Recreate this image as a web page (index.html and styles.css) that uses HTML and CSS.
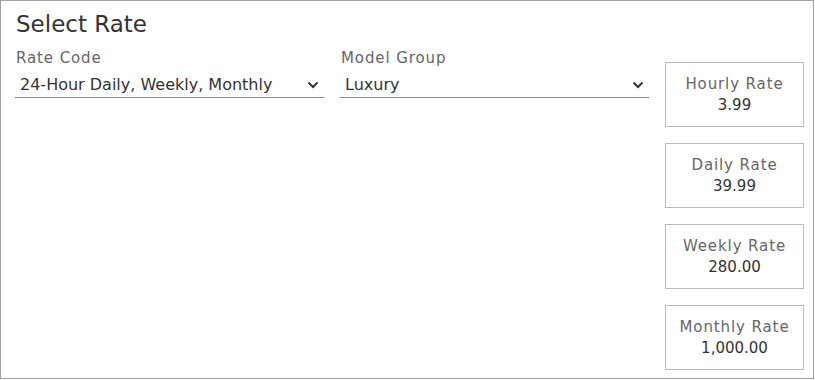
FILE: index.html
```html
<!DOCTYPE html>
<html lang="en">
<head>
    <meta charset="UTF-8">
    <title>Select Rate</title>
    <link rel="stylesheet" href="styles.css">
</head>
<body>
    <div class="panel">
        <h1>Select Rate</h1>
        <div class="layout">
            <div class="field">
                <label for="ratecode">Rate Code</label>
                <div class="select">
                    <span>24-Hour Daily, Weekly, Monthly</span>
                    <svg width="12" height="8" viewBox="0 0 12 8"><path d="M1.5 1.5 L6 6 L10.5 1.5" fill="none" stroke="#333" stroke-width="2"/></svg>
                </div>
            </div>
            <div class="field">
                <label for="modelgroup">Model Group</label>
                <div class="select">
                    <span>Luxury</span>
                    <svg width="12" height="8" viewBox="0 0 12 8"><path d="M1.5 1.5 L6 6 L10.5 1.5" fill="none" stroke="#333" stroke-width="2"/></svg>
                </div>
            </div>
            <div class="rates">
                <div class="rate"><div class="rate-name">Hourly Rate</div><div class="rate-value">3.99</div></div>
                <div class="rate"><div class="rate-name">Daily Rate</div><div class="rate-value">39.99</div></div>
                <div class="rate"><div class="rate-name">Weekly Rate</div><div class="rate-value">280.00</div></div>
                <div class="rate"><div class="rate-name">Monthly Rate</div><div class="rate-value">1,000.00</div></div>
            </div>
        </div>
    </div>
</body>
</html>
```

FILE: styles.css
```css
body { margin: 0; font-family: "DejaVu Sans", sans-serif; background: #fff; color: #333; }
.panel { width: 814px; height: 379px; border: 1px solid #a0a0a0; padding: 8px 0 0 14px; box-sizing: border-box; }
h1 { font-size: 23px; line-height: 30px; font-weight: normal; margin: 0 0 10px 1px; color: #333; }
.layout { display: grid; grid-template-columns: 309px 309px 139px; gap: 16px; align-items: start; }
label { display: block; font-size: 15px; line-height: 18px; color: #666; letter-spacing: 0.9px; margin: 0 0 6px 1px; }
.select { display: flex; align-items: center; justify-content: space-between; border-bottom: 1px solid #888; padding: 2px 5px 2px 5px; font-size: 16px; line-height: 20px; color: #333; }
.rates { display: flex; flex-direction: column; gap: 16px; margin-top: 13px; }
.rate { height: 65px; box-sizing: border-box; border: 1px solid #bbb; display: flex; flex-direction: column; justify-content: center; align-items: center; }
.rate-name { font-size: 15px; line-height: 18px; color: #666; letter-spacing: 0.9px; }
.rate-value { font-size: 15px; line-height: 18px; color: #333; margin-top: 3px; }
```
